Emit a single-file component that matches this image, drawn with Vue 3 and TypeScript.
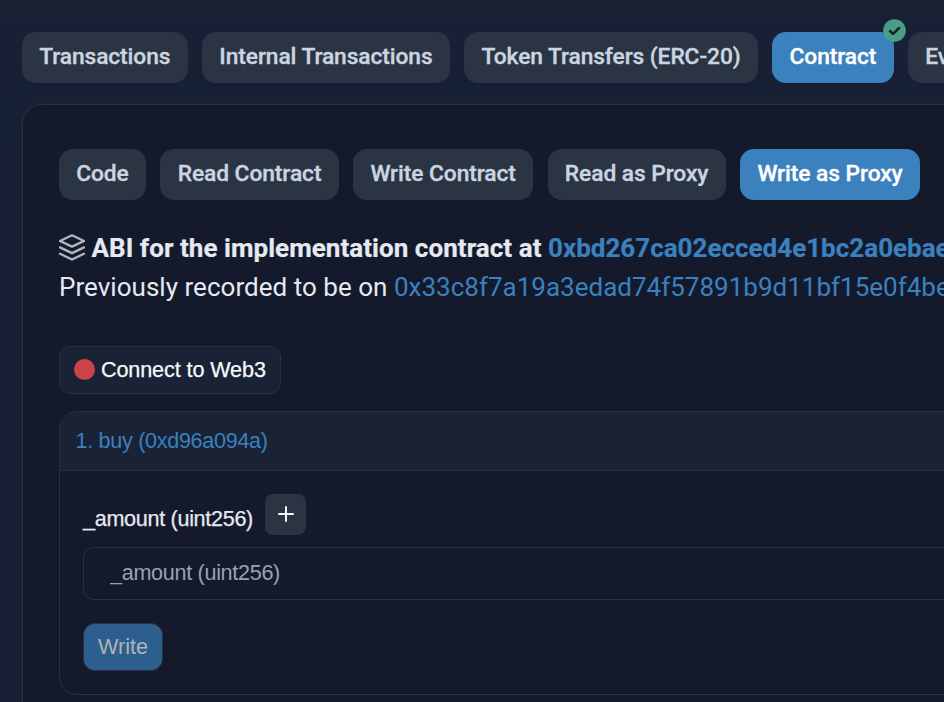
<script setup lang="ts">
interface Tab {
  label: string
  active?: boolean
  verified?: boolean
}

const mainTabs: Tab[] = [
  { label: 'Transactions' },
  { label: 'Internal Transactions' },
  { label: 'Token Transfers (ERC-20)' },
  { label: 'Contract', active: true, verified: true },
  { label: 'Events' },
]

const contractTabs: Tab[] = [
  { label: 'Code' },
  { label: 'Read Contract' },
  { label: 'Write Contract' },
  { label: 'Read as Proxy' },
  { label: 'Write as Proxy', active: true },
]
</script>

<template>
  <main class="page">
    <nav class="tabs main-tabs">
      <button v-for="tab in mainTabs" :key="tab.label" class="tab" :class="{ active: tab.active }">
        {{ tab.label }}
        <svg v-if="tab.verified" class="badge" viewBox="0 0 23 23">
          <circle cx="11.5" cy="11.5" r="11.3" fill="#499f85" />
          <path d="M7 12l3.1 2.9 6-5.9" fill="none" stroke="#17203a" stroke-width="2.5" stroke-linecap="round" stroke-linejoin="round" />
        </svg>
      </button>
    </nav>

    <section class="panel">
      <nav class="tabs">
        <button v-for="tab in contractTabs" :key="tab.label" class="tab" :class="{ active: tab.active }">{{ tab.label }}</button>
      </nav>

      <div class="notice">
        <p class="line strong">
          <svg class="layers" viewBox="0 0 26 27" fill="none" stroke="#b1b7bb" stroke-width="2.3" stroke-linejoin="round" stroke-linecap="round">
            <path d="M13 1.3L25 7 13 12.6 1 7z" />
            <path d="M1 13.4l12 5.7 12-5.7" />
            <path d="M1 19.8l12 5.7 12-5.7" />
          </svg>
          <span class="lead">ABI for the implementation contract at</span>
          <a class="hash">0xbd267ca02ecced4e1bc2a0ebae</a>
        </p>
        <p class="line">
          <span class="lead">Previously recorded to be on</span>
          <a class="hash">0x33c8f7a19a3edad74f57891b9d11bf15e0f4be</a>
        </p>
      </div>

      <button class="connect"><span class="dot"></span><span>Connect to Web3</span></button>

      <article class="method">
        <header class="method-head">1. buy (0xd96a094a)</header>
        <div class="method-body">
          <div class="label-row">
            <label class="field-label" for="amount">_amount (uint256)</label>
            <button class="plus">
              <svg viewBox="0 0 16 16"><path d="M8 1v14M1 8h14" stroke="#f4f6f9" stroke-width="2" stroke-linecap="round" /></svg>
            </button>
          </div>
          <input id="amount" class="field" type="text" placeholder="_amount (uint256)" />
          <button class="write">Write</button>
        </div>
      </article>
    </section>
  </main>
</template>

<style>
body {
  margin: 0;
  overflow: hidden;
  background: #172035;
}
</style>

<style scoped>
.page {
  box-sizing: border-box;
  width: 944px;
  height: 702px;
  padding: 32px 0 0 22px;
  overflow: hidden;
  background: linear-gradient(#1a2333, #172035 24px);
  font-family: Roboto, "Liberation Sans", sans-serif;
  color: #e5e9f1;
}
button {
  font: inherit;
  border: 0;
  margin: 0;
}
.tabs {
  display: flex;
  gap: 14.6px;
  width: max-content;
}
.tab {
  position: relative;
  flex: none;
  height: 51px;
  padding: 0 17.2px 2px;
  border-radius: 14px;
  background: #2b3442;
  color: #cbd5e1;
  font-size: 22.75px;
  font-weight: 500;
  letter-spacing: -0.065px;
  -webkit-text-stroke: 0.35px currentColor;
  white-space: nowrap;
}
.main-tabs .tab {
  letter-spacing: -0.08px;
}
.tab.active {
  background: #3a81be;
  color: #fff;
}
.badge {
  position: absolute;
  top: -13px;
  right: -12px;
  width: 23px;
  height: 23px;
}
.panel {
  box-sizing: border-box;
  width: 1300px;
  height: 720px;
  margin-top: 21px;
  padding: 44px 36px;
  border: 1px solid #28313f;
  border-radius: 20px;
  background: #141a2c;
  box-shadow: 0 0 24px #1b2536;
}
.notice {
  margin-top: 28px;
}
.line {
  display: flex;
  align-items: center;
  height: 39px;
  margin: 0;
  font-size: 26px;
  white-space: nowrap;
}
.lead {
  letter-spacing: 0.03px;
}
.strong {
  font-weight: 700;
  -webkit-text-stroke: 0.2px currentColor;
}
.strong .lead {
  letter-spacing: 0.045px;
}
.layers {
  width: 26px;
  height: 27px;
  margin-right: 6.5px;
}
.hash {
  margin-left: 6.5px;
  color: #3a81be;
}
.connect {
  display: flex;
  align-items: center;
  gap: 5.5px;
  box-sizing: border-box;
  width: 222px;
  height: 48px;
  margin-top: 40px;
  padding: 0 14px 1px;
  border: 1px solid #28313f;
  border-radius: 11px;
  background: #1a2236;
  color: #f7f9fb;
  font-family: "Liberation Sans", sans-serif;
  font-size: 21.6px;
  letter-spacing: -0.1px;
  -webkit-text-stroke: 0.25px currentColor;
  white-space: nowrap;
}
.dot {
  flex: none;
  width: 21.4px;
  height: 21.4px;
  border-radius: 50%;
  background: #cc444b;
}
.method {
  box-sizing: border-box;
  height: 284px;
  margin-top: 17px;
  border: 1px solid #28313f;
  border-radius: 18px;
  overflow: hidden;
  font-family: "Liberation Sans", sans-serif;
  font-size: 21.6px;
  letter-spacing: -0.31px;
}
.method-head {
  box-sizing: border-box;
  height: 59px;
  padding-left: 15.5px;
  border-bottom: 1px solid #28313f;
  background: #1a2236;
  color: #3a81be;
  line-height: 58px;
}
.method-body {
  padding: 23px;
}
.label-row {
  display: flex;
  height: 41px;
  gap: 12px;
}
.field-label {
  line-height: 49px;
  -webkit-text-stroke: 0.25px currentColor;
}
.plus {
  display: grid;
  place-items: center;
  width: 41px;
  height: 41px;
  padding: 0 0 1px;
  border-radius: 8px;
  background: #2b3442;
}
.plus svg {
  width: 16px;
  height: 16px;
}
.field {
  display: block;
  box-sizing: border-box;
  width: 1300px;
  height: 53px;
  margin-top: 12px;
  padding: 0 26px 2px;
  border: 1px solid #28313f;
  border-radius: 11px;
  background: transparent;
  color: #e5e9f1;
  font: inherit;
  letter-spacing: inherit;
  outline: none;
}
.field::placeholder {
  color: #94a3b8;
  opacity: 1;
}
.write {
  display: block;
  width: 80px;
  height: 48px;
  margin-top: 23px;
  padding: 0 0 1px;
  border: 1px solid #28313f;
  border-radius: 12px;
  background: #2c5f8e;
  color: #b1b3b8;
  letter-spacing: 0;
}
</style>
